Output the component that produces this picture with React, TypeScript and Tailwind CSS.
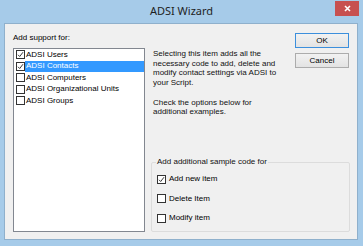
import React from 'react';

const FONT = { fontFamily: '"Liberation Sans", Arial, sans-serif' };

const Box: React.FC<{ checked?: boolean }> = ({ checked = false }) => (
    <span className="w-[9px] h-[9px] border border-[#333333] bg-white flex items-center justify-center shrink-0">
        {checked && (
            <svg width="7" height="7" viewBox="0 0 7 7">
                <path d="M1 3.8 L2.7 5.5 L6 1.2" fill="none" stroke="#222222" strokeWidth="0.9" />
            </svg>
        )}
    </span>
);

const items = [
    { label: 'ADSI Users', checked: true },
    { label: 'ADSI Contacts', checked: true, selected: true },
    { label: 'ADSI Computers', checked: false },
    { label: 'ADSI Organizational Units', checked: false },
    { label: 'ADSI Groups', checked: false },
];

const options = [
    { label: 'Add new item', checked: true },
    { label: 'Delete Item', checked: false },
    { label: 'Modify item', checked: false },
];

export default function App() {
    return (
        <div className="w-[363px] h-[246px] bg-[#a6cbe9] flex flex-col text-[8px] text-black" style={FONT}>
            {/* Title bar */}
            <div className="relative h-[23px] shrink-0 flex items-center justify-center">
                <span className="text-[11px] text-[#1e1e1e] pb-[1px]" style={{ fontFamily: '"Noto Sans", "Open Sans", sans-serif' }}>
                    ADSI Wizard
                </span>
                <div className="absolute top-[1px] right-[4px] w-[24px] h-[15px] bg-[#c75050] flex items-center justify-center">
                    <svg width="7" height="7" viewBox="0 0 7 7">
                        <path d="M1 1 L6 6 M6 1 L1 6" stroke="#ffffff" strokeWidth="1.6" />
                    </svg>
                </div>
            </div>

            {/* Client area */}
            <div className="ml-[4px] w-[354px] h-[217px] bg-[#f0f0f0] border border-[#8fb0cc] flex pt-[9px] pb-[7px] pl-[8px]">
                {/* Left column */}
                <div className="w-[132px] flex flex-col">
                    <div className="h-[10px] leading-[10px] mb-[5px] whitespace-nowrap">Add support for:</div>
                    <div className="flex-1 bg-white border border-[#828790] flex flex-col">
                        {items.map((it) => (
                            <div key={it.label} className="h-[11.5px] flex items-center pl-[2px]">
                                <Box checked={it.checked} />
                                <span
                                    className={`h-full flex-1 flex items-center pl-[1px] whitespace-nowrap ${
                                        it.selected ? 'bg-[#3399ff] text-white' : ''
                                    }`}
                                >
                                    {it.label}
                                </span>
                            </div>
                        ))}
                    </div>
                </div>

                {/* Right column */}
                <div className="w-[199px] ml-[6px] flex flex-col">
                    <div className="flex">
                        <div className="pt-[16px] pl-[2px] leading-[9.7px] whitespace-nowrap text-[#111]">
                            Selecting this item adds all the<br />
                            necessary code to add, delete and<br />
                            modify contact settings via ADSI to<br />
                            your Script.
                            <div className="h-[9.7px]" />
                            Check the options below for<br />
                            additional examples.
                        </div>
                        <div className="ml-auto mr-[1px] w-[54px] flex flex-col gap-[5px]">
                            <button className="h-[15px] border border-[#3c8fdc] bg-gradient-to-b from-[#f2f2f2] to-[#e3e3e3] text-[8px] leading-none">
                                OK
                            </button>
                            <button className="h-[15px] border border-[#acacac] bg-gradient-to-b from-[#f2f2f2] to-[#e3e3e3] text-[8px] leading-none">
                                Cancel
                            </button>
                        </div>
                    </div>

                    <fieldset className="mt-auto h-[75px] border border-[#dcdcdc] rounded-[2px]">
                        <legend className="ml-[4px] px-[1px] leading-[10px] text-[#111]">Add additional sample code for</legend>
                        <div className="pl-[5px] pt-[6px] flex flex-col gap-[7.5px]">
                            {options.map((o) => (
                                <div key={o.label} className="h-[12px] flex items-center gap-[3px] whitespace-nowrap">
                                    <Box checked={o.checked} />
                                    <span>{o.label}</span>
                                </div>
                            ))}
                        </div>
                    </fieldset>
                </div>
            </div>
        </div>
    );
}
